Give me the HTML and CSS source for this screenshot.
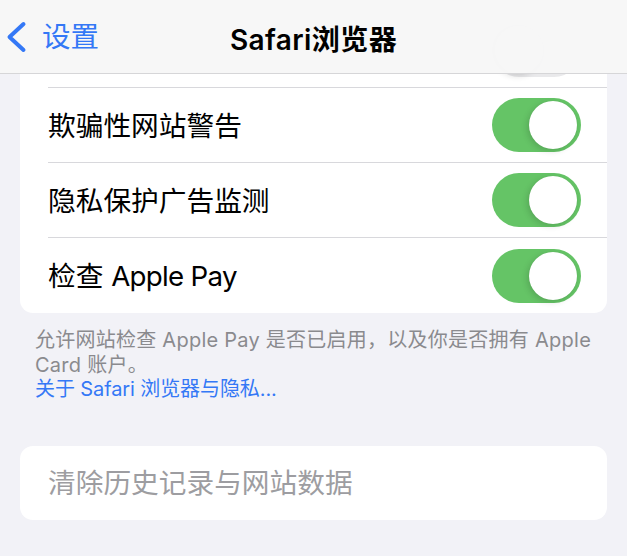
FILE: index.html
```html
<!DOCTYPE html>
<html lang="zh-CN">
<head>
<meta charset="utf-8">
<title>Safari浏览器</title>
<link rel="stylesheet" href="styles.css">
</head>
<body>
<header class="nav">
  <div class="nav-left">
    <svg class="chevron" width="24" height="34" viewBox="0 0 24 34"><path d="M18.5 4 L4.5 17 L18.5 30" fill="none" stroke="#3478f6" stroke-width="4" stroke-linecap="round" stroke-linejoin="round"/></svg>
    <span class="back-label">设置</span>
  </div>
  <div class="nav-title">Safari浏览器</div>
  <div class="nav-right"></div>
</header>
<main class="page">
  <section class="card">
    <div class="row"><div class="row-inner"><span class="label"></span><span class="toggle off"><span class="knob"></span></span></div></div>
    <div class="row"><div class="row-inner"><span class="label">欺骗性网站警告</span><span class="toggle on"><span class="knob"></span></span></div></div>
    <div class="row"><div class="row-inner"><span class="label">隐私保护广告监测</span><span class="toggle on"><span class="knob"></span></span></div></div>
    <div class="row"><div class="row-inner last"><span class="label">检查 <span class="latin">Apple Pay</span></span><span class="toggle on"><span class="knob"></span></span></div></div>
  </section>
  <p class="footer">允许网站检查 Apple Pay 是否已启用，以及你是否拥有 Apple Card 账户。<br><span class="link">关于 Safari 浏览器与隐私...</span></p>
  <section class="card card-single">
    <div class="row"><div class="row-inner last"><span class="label disabled">清除历史记录与网站数据</span></div></div>
  </section>
</main>
</body>
</html>
```
FILE: styles.css
```css
* { box-sizing: border-box; }
html, body {
  margin: 0;
  padding: 0;
}
body {
  width: 627px;
  height: 556px;
  overflow: hidden;
  background: #f2f2f7;
  font-family: "Inter", "Noto Sans CJK SC", sans-serif;
  color: #000;
  position: relative;
}
.nav {
  position: absolute;
  top: 0;
  left: 0;
  right: 0;
  height: 74px;
  background: rgba(247, 247, 247, 0.97);
  border-bottom: 1px solid #d6d6d8;
  display: grid;
  grid-template-columns: 1fr auto 1fr;
  align-items: center;
  z-index: 2;
}
.nav-left {
  display: flex;
  align-items: center;
  padding-left: 5px;
  gap: 13px;
  color: #3478f6;
  font-size: 28.5px;
}
.chevron { display: block; }
.back-label { line-height: 1; margin-top: 2px; }
.nav-title {
  font-size: 28px;
  font-weight: 600;
  letter-spacing: 0.4px;
  margin-top: 2px;
}
.page {
  padding: 13px 20px 0;
}
.card {
  background: #fff;
  border-radius: 13px;
  overflow: hidden;
}
.row {
  padding-left: 28px;
}
.row-inner {
  height: 75px;
  display: flex;
  align-items: center;
  justify-content: space-between;
  padding-right: 26px;
  border-bottom: 1px solid #d8d8dc;
}
.row-inner.last { border-bottom: none; }
.label {
  font-size: 27.7px;
  line-height: 1;
  margin-top: 3px;
}
.latin { letter-spacing: -0.7px; }
.label.disabled { color: #9d9da1; }
.toggle {
  width: 89px;
  height: 54px;
  border-radius: 27px;
  padding: 3px 4px 3px 3px;
  display: flex;
  align-items: center;
}
.toggle.on { background: #65c466; justify-content: flex-end; }
.toggle.off { background: #e9e9eb; justify-content: flex-start; }
.knob {
  width: 48px;
  height: 48px;
  border-radius: 50%;
  background: #fff;
  box-shadow: -2px 2px 6px rgba(0, 0, 0, 0.14), 0 0 1px rgba(0, 0, 0, 0.08);
}
.footer {
  margin: 15px 0 0;
  padding: 0 10px 0 15px;
  font-size: 20px;
  letter-spacing: 0.25px;
  line-height: 24.5px;
  color: #8a8a8e;
}
.link { color: #3478f6; letter-spacing: -0.1px; }
.card-single { margin-top: 44px; }
.card-single .row-inner { height: 74px; }
```
